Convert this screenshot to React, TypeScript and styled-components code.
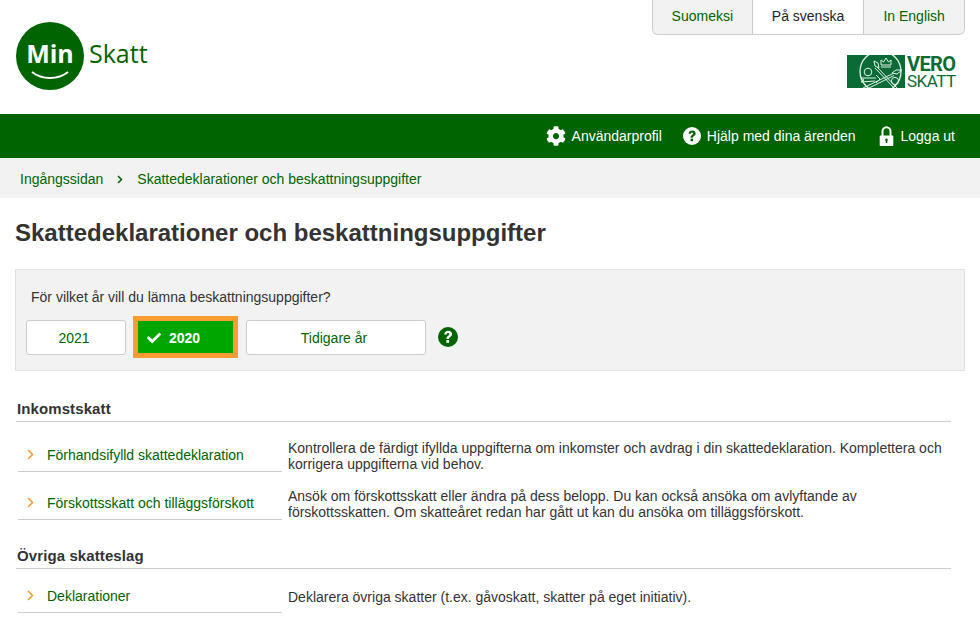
import React from "react";
import styled, { createGlobalStyle } from "styled-components";
import { FaCog, FaCheck } from "react-icons/fa";

const Global = createGlobalStyle`
  html, body { margin: 0; padding: 0; background: #fff; }
  body { font-family: "Liberation Sans", Arial, sans-serif; font-size: 14px; color: #333; overflow: hidden; }
  a { text-decoration: none; }
`;

const Page = styled.div`width: 980px; height: 635px; overflow: hidden;`;

const Header = styled.header`
  height: 114px; display: flex; justify-content: space-between; box-sizing: border-box;
`;
const LogoBlock = styled.a`
  display: flex; align-items: flex-start; padding: 22px 0 0 16px; gap: 5px;
`;
const Circle = styled.div`
  width: 68px; height: 68px; border-radius: 50%; background: #006400; color: #fff;
  display: flex; flex-direction: column; align-items: center; padding-top: 19px; box-sizing: border-box;
`;
const MinText = styled.span`
  font: bold 25px/25px "Open Sans", sans-serif;
`;
const SkattText = styled.span`
  font: 25px/25px "Open Sans", sans-serif; color: #006400; margin-top: 19px; display: block;
`;
const HeaderRight = styled.div`
  display: flex; flex-direction: column; align-items: flex-end; padding-right: 15px;
`;
const LangTabs = styled.nav`
  display: flex; height: 35px; box-sizing: border-box; width: 313px;
  border: 1px solid #ccc; border-top: 0; border-radius: 0 0 6px 6px; overflow: hidden; background: #f2f2f2;
`;
const LangTab = styled.a<{ $active?: boolean; $w: number }>`
  width: ${p => p.$w}px; display: flex; align-items: center; justify-content: center; box-sizing: border-box;
  font-size: 14px; padding-bottom: 2px; color: ${p => (p.$active ? "#222" : "#006400")};
  background: ${p => (p.$active ? "#fff" : "#f2f2f2")};
  border-right: 1px solid #ccc;
  &:last-child { border-right: 0; }
`;
const VeroMark = styled.div`
  display: flex; gap: 2px; margin-top: 20px; margin-right: 9px; height: 34px;
`;
const VeroWords = styled.div`display: flex; flex-direction: column; color: #0a6b36; width: 49px; padding-top: 1px;`;
const VeroWord = styled.span`
  font: bold 20px/17px Roboto, sans-serif; letter-spacing: -.6px;
`;
const SkattWord = styled.span`
  font: 17px/17px Roboto, sans-serif; letter-spacing: -.5px;
`;

const TopBar = styled.nav`
  height: 44px; background: #006400; display: flex; justify-content: flex-end; align-items: center;
  padding-right: 25px; gap: 21px;
`;
const TopLink = styled.a`
  display: flex; align-items: center; gap: 6px; color: #fff; font-size: 14px;
  &:last-child { margin-left: 2px; }
`;
const Crumbs = styled.nav`
  height: 40px; background: #f2f2f2; display: flex; align-items: center; padding: 2px 0 0 20px; box-sizing: border-box;
  color: #006400; font-size: 14px;
`;
const Sep = styled.span`display: flex; margin: 0 14px 0 14px;`;
const Title = styled.h1`
  margin: 22px 0 0 15px; font-size: 24px; line-height: 26px; font-weight: bold; color: #333;
`;
const Panel = styled.section`
  margin: 23px 15px 0; height: 102px; box-sizing: border-box; background: #f2f2f2; border: 1px solid #e0e0e0;
  padding: 19px 10px 0;
`;
const Question = styled.p`margin: 0 0 0 5px; font-size: 14px; line-height: 16px; color: #333;`;
const YearRow = styled.div`display: flex; align-items: center; margin-top: 11px;`;
const YearBtn = styled.button<{ $w: number }>`
  width: ${p => p.$w}px; height: 35px; background: #fff; border: 1px solid #ccc; border-radius: 3px;
  font: 14px "Liberation Sans", Arial, sans-serif; color: #006400; padding: 1px 4px 0 0; margin-right: 7px;
`;
const ActiveYear = styled.button`
  width: 105px; height: 42px; margin: 0 8px 0 0; box-sizing: border-box; background: #00a600; border: 5px solid #f99d33;
  color: #fff; font: bold 14px "Liberation Sans", Arial, sans-serif; display: flex; align-items: center; gap: 8px; padding: 1px 0 0 9px;
`;
const HelpDot = styled.span`display: flex; margin-left: 5px;`;
const Section = styled.section<{ $top: number }>`margin: ${p => p.$top}px 29px 0 16px;`;
const SectionTitle = styled.h2`
  margin: 0; font-size: 15px; line-height: 16px; font-weight: bold; color: #333; padding: 0 0 4px 1px;
  border-bottom: 1px solid #ccc; letter-spacing: .1px;
`;
const RowList = styled.div`padding-top: 2px;`;
const Row = styled.div<{ $h?: number }>`display: flex; height: ${p => p.$h ?? 48}px;`;
const RowLink = styled.a`
  width: 264px; margin-left: 2px; box-sizing: border-box; border-bottom: 1px solid #ccc; color: #006400;
  display: flex; align-items: flex-end; padding: 0 0 8px 9px; gap: 13px; font-size: 14px; line-height: 16px;
`;
const RowText = styled.p<{ $top?: number }>`
  margin: 0; padding: ${p => p.$top ?? 16}px 0 0 6px; font-size: 14px; line-height: 16px; color: #333; flex: 1;
  white-space: pre-line;
`;

const Chevron = () => (
  <svg width="7" height="11" viewBox="0 0 7 11" style={{ marginBottom: 3 }}>
    <path d="M1 1l4.5 4.5L1 10" fill="none" stroke="#f99d33" strokeWidth="1.6" />
  </svg>
);
const Help = ({ bg, fg, size }: { bg: string; fg: string; size: number }) => (
  <svg width={size} height={size} viewBox="0 0 20 20">
    <circle cx="10" cy="10" r="10" fill={bg} />
    <path d="M6.200 7.400C6.400 5 8.100 3.800 10.200 3.800c2.300 0 3.900 1.300 3.900 3.300 0 1.500-.9 2.300-1.900 3-.8.600-1.100 1-1.100 1.900H8.400c0-1.700.5-2.400 1.500-3.100.9-.7 1.300-1.100 1.300-1.700 0-.7-.5-1.200-1.200-1.200-.8 0-1.300.5-1.500 1.600z" fill={fg} />
    <rect x="8.400" y="13" width="2.700" height="2.800" fill={fg} />
  </svg>
);
const Lock = () => (
  <svg width="16" height="20" viewBox="0 0 16 20">
    <path d="M3.500 10V5.500C3.500 3 5.300 1.200 7.500 1.200s4 1.800 4 4.300V10" fill="none" stroke="#fff" strokeWidth="2" />
    <path fillRule="evenodd" fill="#fff" d="M1.500 9.500h12c.4 0 .8.300.8.800v8.900c0 .4-.4.800-.8.800h-12c-.4 0-.8-.4-.8-.8v-8.900c0-.5.400-.8.800-.8zM7.500 12.500a1.400 1.400 0 0 0-.8 2.500V17h1.600v-2a1.400 1.400 0 0 0-.8-2.500z" />
  </svg>
);
const Smile = () => (
  <svg width="38" height="12" viewBox="0 0 38 12" style={{ marginTop: 4 }}>
    <path d="M1 2c10 8 26 8 36 0" fill="none" stroke="#fff" strokeWidth="1.800" />
  </svg>
);
const VeroEmblem = () => (
  <svg width="58" height="33" viewBox="0 0 58 33">
    <defs>
      <clipPath id="vero-clip"><rect x="0" y="0" width="58" height="33" /></clipPath>
    </defs>
    <rect x="0" y="0" width="58" height="33" fill="#0a6b36" />
    <g clipPath="url(#vero-clip)" fill="none" stroke="#e3f0e8" strokeWidth="1">
      <circle cx="33.500" cy="16.500" r="20.500" strokeWidth="1.300" />
      <path d="M27 6l4 2 1 5-4-2zM30 12l20 21M28 13l20 21" />
      <path d="M55 15l-5 4-5-1 4-3zM46 18.500L16 33M47 20.500L20 34" />
      <circle cx="21" cy="17" r="3.800" />
      <circle cx="48" cy="26" r="3.600" />
      <path d="M34 10V5l2.500 2L39 3l2.500 4L44 5v5zM34 12h10" />
      <path d="M14 23l15 0M14 27l14-1M29 20l4 4-4 4M14 23l3 2-3 2" />
    </g>
  </svg>
);

const rows1 = [
  ["Förhandsifylld skattedeklaration", "Kontrollera de färdigt ifyllda uppgifterna om inkomster och avdrag i din skattedeklaration. Komplettera och\nkorrigera uppgifterna vid behov."],
  ["Förskottsskatt och tilläggsförskott", "Ansök om förskottsskatt eller ändra på dess belopp. Du kan också ansöka om avlyftande av\nförskottsskatten. Om skatteåret redan har gått ut kan du ansöka om tilläggsförskott."],
];

export default function App() {
  return (
    <Page>
      <Global />
      <Header>
        <LogoBlock>
          <Circle>
            <MinText>Min</MinText>
            <Smile />
          </Circle>
          <SkattText>Skatt</SkattText>
        </LogoBlock>
        <HeaderRight>
          <LangTabs>
            <LangTab $w={100} href="#">Suomeksi</LangTab>
            <LangTab $w={112} href="#" $active>På svenska</LangTab>
            <LangTab $w={100} href="#">In English</LangTab>
          </LangTabs>
          <VeroMark>
            <VeroEmblem />
            <VeroWords>
              <VeroWord>VERO</VeroWord>
              <SkattWord>SKATT</SkattWord>
            </VeroWords>
          </VeroMark>
        </HeaderRight>
      </Header>
      <TopBar>
        <TopLink href="#"><FaCog size={20} color="#fff" />Användarprofil</TopLink>
        <TopLink href="#"><Help bg="#fff" fg="#006400" size={18} />Hjälp med dina ärenden</TopLink>
        <TopLink href="#"><Lock />Logga ut</TopLink>
      </TopBar>
      <Crumbs>
        Ingångssidan
        <Sep><svg width="6" height="9" viewBox="0 0 6 9"><path d="M1 1l3.500 3.500L1 8" fill="none" stroke="#006400" strokeWidth="1.500" /></svg></Sep>
        Skattedeklarationer och beskattningsuppgifter
      </Crumbs>
      <Title>Skattedeklarationer och beskattningsuppgifter</Title>
      <Panel>
        <Question>För vilket år vill du lämna beskattningsuppgifter?</Question>
        <YearRow>
          <YearBtn $w={100}>2021</YearBtn>
          <ActiveYear><FaCheck size={14} color="#fff" />2020</ActiveYear>
          <YearBtn $w={180}>Tidigare år</YearBtn>
          <HelpDot><Help bg="#006400" fg="#fff" size={20} /></HelpDot>
        </YearRow>
      </Panel>
      <Section $top={30}>
        <SectionTitle>Inkomstskatt</SectionTitle>
        <RowList>
          {rows1.map(([a, b]) => (
            <Row key={a}>
              <RowLink href="#"><Chevron />{a}</RowLink>
              <RowText>{b}</RowText>
            </Row>
          ))}
        </RowList>
      </Section>
      <Section $top={28}>
        <SectionTitle>Övriga skatteslag</SectionTitle>
        <RowList>
          <Row $h={42}>
            <RowLink href="#"><Chevron />Deklarationer</RowLink>
            <RowText $top={18}>Deklarera övriga skatter (t.ex. gåvoskatt, skatter på eget initiativ).</RowText>
          </Row>
        </RowList>
      </Section>
    </Page>
  );
}
